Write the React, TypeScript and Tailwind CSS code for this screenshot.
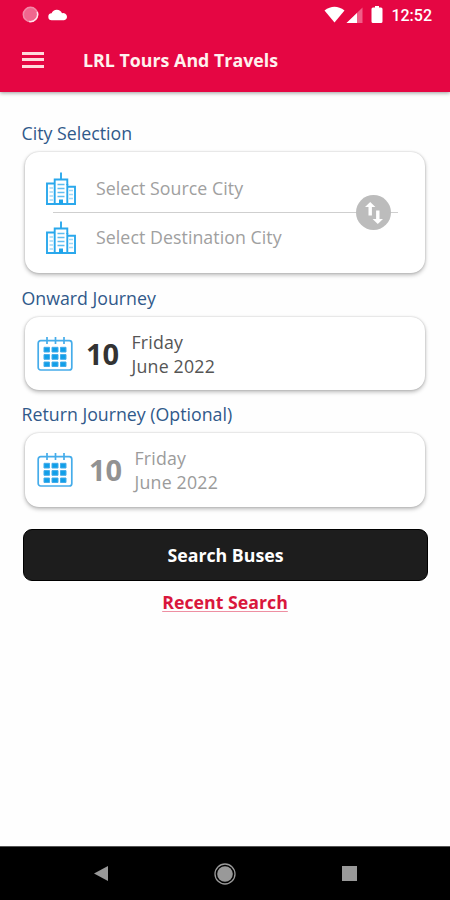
import React from "react";

function BuildingsIcon() {
  return (
    <svg width="32" height="34" viewBox="0 0 32 34" fill="none" stroke="#2aa8ec" strokeWidth="1.9">
      <path d="M16 .5v7" />
      <path d="M9.700 12V7.500h12.600V13" />
      <path d="M9.700 11.500H2V32M22.300 14.700H30V32M9.700 12v20M22.300 12v20M1 32h30" />
      <path d="M4.500 16h3.500M4.500 20h3.500M4.500 24h3.500M4.500 28h3.500M24 18.500h4M24 22.500h4M24 26.500h4" strokeWidth="1.500" opacity=".45" />
      <path d="M12.500 12.500h7M12.500 16.500h7M12.500 20.500h7M12.500 24.500h7" strokeWidth="1.600" opacity=".75" />
      <path d="M14 32v-4.500h4V32z" fill="#1ea4ea" stroke="none" />
    </svg>
  );
}

function CalendarIcon() {
  return (
    <svg width="36" height="36" viewBox="0 0 36 36" fill="none" stroke="#45acea" strokeWidth="1.700">
      <rect x="1.200" y="4.700" width="33.600" height="29.300" rx="2.500" />
      <path d="M10 1v7M18.500 1v7M27 1v7" />
      <path
        d="M7 11.300h5.500v4.700H7zM15 11.300h6v4.700h-6zM23.500 11.300h5.500v4.700h-5.500zM7 18.600h5.500v4.700H7zM15 18.600h6v4.700h-6zM23.500 18.600h5.500v4.700h-5.500zM7 26h5.500v4.500H7zM15 26h6v4.500h-6zM23.500 26h5.500v4.500h-5.500z"
        fill="#119fe8"
        strokeWidth="1"
      />
    </svg>
  );
}

const card = "mx-[25px] rounded-[14px] bg-white shadow-[0_2px_4px_rgba(0,0,0,0.28),0_0_2px_rgba(0,0,0,0.2)]";
const label = "pl-[21.5px] text-[17.75px] leading-6 text-[#30598a]";

function DateCard({ muted }: { muted?: boolean }) {
  return (
    <div className={`${card} ${muted ? "h-[74px]" : "h-[73px]"} flex items-center pl-3`}>
      <CalendarIcon />
      <span
        className={
          muted
            ? "ml-[16px] w-[45.5px] text-[29px] font-bold text-[#929292]"
            : "ml-[13px] w-[45.5px] text-[29px] font-bold text-[#333333]"
        }
      >
        10
      </span>
      <div className={`text-[17.75px] leading-6 tracking-[0.2px] ${muted ? "text-[#9b9b9b]" : "text-[#555555]"}`}>
        <p>Friday</p>
        <p>June 2022</p>
      </div>
    </div>
  );
}

export default function App() {
  return (
    <div className="flex h-[900px] w-[450px] flex-col bg-[#fefefe] font-['Open_Sans',sans-serif]">
      <header className="h-[92px] shrink-0 bg-[#e50643] text-white shadow-[0_1px_4px_rgba(0,0,0,0.4)]">
        <div className="flex h-7 items-center pl-[22px] pr-[18px]">
          <svg width="17" height="17" viewBox="0 0 17 17">
            <circle cx="8.500" cy="8.500" r="7.200" fill="#f0668e" stroke="#f38aa8" strokeWidth="1.500" />
            <path d="M15.200 6a7.200 7.200 0 0 1-8 9.500" stroke="#ffe3ea" strokeWidth="1.400" fill="none" />
          </svg>
          <svg className="ml-[9px]" width="20" height="13" viewBox="0 0 20 13" fill="#fff">
            <path d="M4 12.200a3.500 3.500 0 0 1-.4-7A5.600 5.600 0 0 1 14 5.200a4 4 0 0 1 5 3.600 3.400 3.400 0 0 1-3 3.400z" />
          </svg>
          <svg className="ml-auto" width="40" height="19" viewBox="0 0 40 19">
            <path d="M.5 5.500Q10.500-2 20.500 5.500L10.500 17.500z" fill="#fff" />
            <path d="M38.500 2.500V18H22.500z" fill="#f05e87" />
            <path d="M33 8V18H22.500z" fill="#fff" />
          </svg>
          <svg className="ml-[7px] mt-px" width="12" height="17" viewBox="0 0 12 17" fill="#fff">
            <path d="M4 0h4v1.500h2A1.500 1.500 0 0 1 11.500 3v12.500A1.500 1.500 0 0 1 10 17H2a1.500 1.500 0 0 1-1.500-1.500V3A1.500 1.500 0 0 1 2 1.500h2z" />
          </svg>
          <span className="ml-[8px] mt-[3px] font-[Roboto,sans-serif] text-[16px] font-medium leading-none">12:52</span>
        </div>
        <div className="flex h-16 items-center pl-[22px]">
          <div className="-mt-px flex flex-col gap-[3.500px]">
            <span className="h-[3px] w-[22px] bg-[#ffd9dc]" />
            <span className="h-[3px] w-[22px] bg-[#ffd9dc]" />
            <span className="h-[3px] w-[22px] bg-[#ffd9dc]" />
          </div>
          <h1 className="ml-[39px] mt-px text-[17.75px] font-bold tracking-[0.03px] text-[#fff1ee]">LRL Tours And Travels</h1>
        </div>
      </header>

      <main className="flex-1">
        <p className={`${label} mt-[29px]`}>City Selection</p>
        <section className={`${card} relative mt-[7px] h-[121px] pl-[20px] pt-[18px]`}>
          <div className="flex h-[38px] items-center gap-[19px]">
            <BuildingsIcon />
            <span className="-mt-px text-[17.75px] tracking-[0.06px] text-[#a0a0a0]">Select Source City</span>
          </div>
          <div className="my-[4px] ml-[8px] h-px w-[345px] bg-[#cfcfcf]" />
          <div className="mt-[6px] flex h-[38px] items-center gap-[19px]">
            <BuildingsIcon />
            <span className="-mt-px text-[17.75px] tracking-[0.06px] text-[#a0a0a0]">Select Destination City</span>
          </div>
          <button className="absolute right-[34px] top-[43px] flex size-[35px] items-center justify-center rounded-full bg-[#bcbcbc]">
            <svg width="20" height="24" viewBox="0 0 20 24" fill="#fff">
              <path d="M6.200 1l5.200 5H7.900v8.500H4.500V6H1z" />
              <path d="M13.800 23l5.200-5h-3.500V9.500h-3.400V18H8.600z" />
            </svg>
          </button>
        </section>

        <p className={`${label} mt-[13px]`}>Onward Journey</p>
        <div className="mt-[7px]"><DateCard /></div>

        <p className={`${label} mt-[12px]`}>Return Journey (Optional)</p>
        <div className="mt-[7px]"><DateCard muted /></div>

        <button className="ml-[23px] mt-[22px] block h-[52px] w-[405px] rounded-[9px] border border-black bg-[#1d1d1d] pt-px text-[17.75px] font-bold text-white">
          Search Buses
        </button>
        <p className="mt-[9px] text-center text-[17.75px] font-bold leading-6 text-[#d9173c]">
          <span className="underline decoration-[#ee8fa2] decoration-1 underline-offset-[2px] [text-decoration-skip-ink:none]">Recent Search</span>
        </p>
      </main>

      <nav className="flex h-[54px] shrink-0 items-center border-t border-[#555] bg-black pl-[94px]">
        <svg width="15" height="17" viewBox="0 0 15 17" fill="#999"><path d="M14 1v15L0 8.500z" /></svg>
        <svg className="ml-[105px]" width="22" height="22" viewBox="0 0 22 22">
          <circle cx="11" cy="11" r="10" fill="none" stroke="#999" strokeWidth="1.300" />
          <circle cx="11" cy="11" r="7.800" fill="#999" />
        </svg>
        <span className="ml-[106px] size-[15px] bg-[#999]" />
      </nav>
    </div>
  );
}
